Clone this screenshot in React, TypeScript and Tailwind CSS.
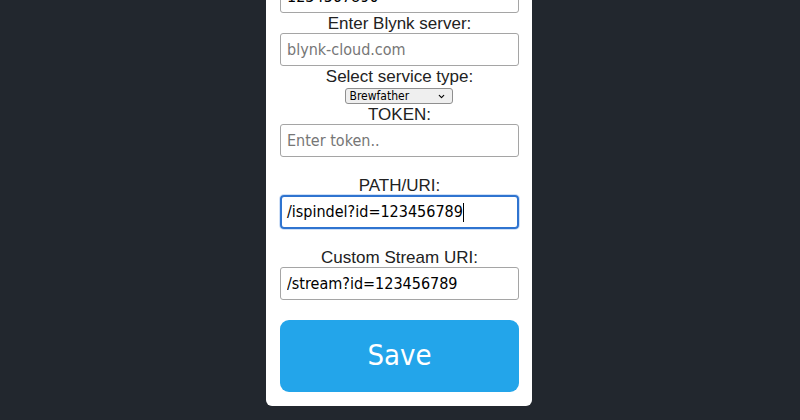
import { ChevronDown } from "lucide-react";

const LABEL = "block text-center text-[17px] leading-[19px] text-[#222] [font-family:'Liberation_Sans',Arial,sans-serif]";
const FIELD = "block w-full h-[33px] px-[6px] border border-[#a5a5a5] rounded-[3px] bg-white text-[16px] text-black placeholder:text-[#767676] outline-none [font-family:'DejaVu_Sans',sans-serif] font-stretch-condensed";

export default function App() {
  return (
    <div className="h-[420px] overflow-hidden bg-[#22272e] flex flex-col justify-end items-center pb-[14px]">
      <div className="w-[266px] shrink-0 bg-white rounded-[6px] pl-[14px] pr-[13px] pb-[14px] ml-[-2px]">
        <input className={FIELD} defaultValue="1234567890" />
        <label className={`${LABEL} pt-[1px]`}>Enter Blynk server:</label>
        <input className={FIELD} placeholder="blynk-cloud.com" />
        <label className={`${LABEL} pt-[1px]`}>Select service type:</label>
        <div className="flex justify-center pt-[2px] pb-[1px]">
          <div className="relative w-[108px] h-[16px] ml-[-2px]">
            <select
              defaultValue="brewfather"
              className="block appearance-none w-full h-[16px] bg-[#efefef] border border-[#8f8f8f] rounded-[3px] pl-[4px] py-0 text-[12px] leading-[14px] text-black [font-family:'DejaVu_Sans',sans-serif] font-stretch-condensed outline-none"
            >
              <option value="brewfather">Brewfather</option>
              <option value="ubidots">Ubidots</option>
              <option value="http">HTTP</option>
            </select>
            <ChevronDown className="absolute right-[7px] top-[4px] w-[9px] h-[9px] text-black pointer-events-none" strokeWidth={3} />
          </div>
        </div>
        <label className={LABEL}>TOKEN:</label>
        <input className={FIELD} placeholder="Enter token.." />
        <div className="h-[19px]" />
        <label className={LABEL}>PATH/URI:</label>
        <div className="flex items-center h-[34px] px-[5px] border-2 border-[#2f74d0] rounded-[4px] shadow-[0_0_0_1px_#cfe0f7] text-[16px] text-black [font-family:'DejaVu_Sans',sans-serif] font-stretch-condensed">
          <span>/ispindel?id=123456789</span>
          <span className="w-[1px] h-[19px] bg-black" />
        </div>
        <div className="h-[19px]" />
        <label className={LABEL}>Custom Stream URI:</label>
        <input className={FIELD} defaultValue="/stream?id=123456789" />
        <button className="mt-[20px] w-full h-[72px] rounded-[9px] bg-[#23a5ea] text-white text-[29px] [font-family:'DejaVu_Sans',sans-serif] font-stretch-condensed">
          Save
        </button>
      </div>
    </div>
  );
}
